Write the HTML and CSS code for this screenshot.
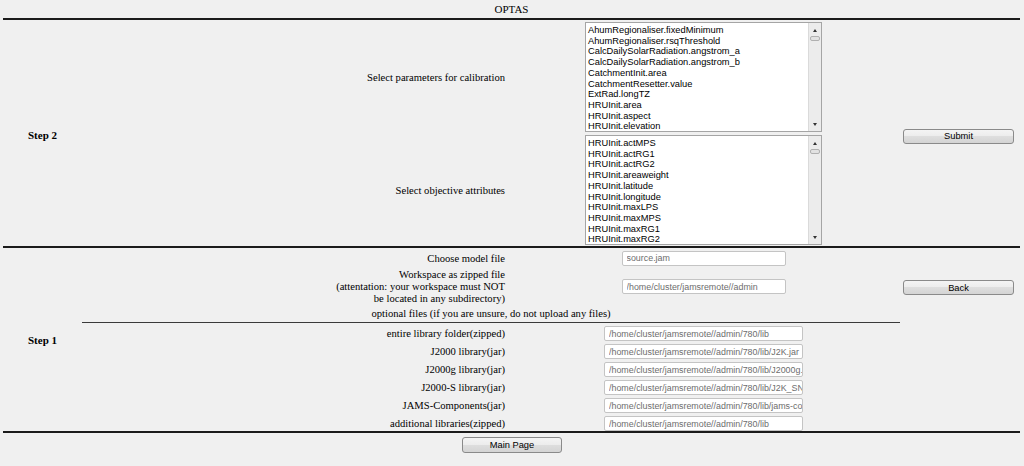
FILE: index.html
```html
<!DOCTYPE html>
<html>
<head>
<meta charset="utf-8">
<title>OPTAS</title>
<link rel="stylesheet" href="styles.css">
</head>
<body>
<div class="page">
  <div class="title">OPTAS</div>

  <section class="step step2">
    <div class="step-name s2name">Step 2</div>
    <div class="label r1">Select parameters for calibration</div>
    <div class="ctrl r1">
      <div class="listbox">
        <ul class="items">
          <li>AhumRegionaliser.fixedMinimum</li>
          <li>AhumRegionaliser.rsqThreshold</li>
          <li>CalcDailySolarRadiation.angstrom_a</li>
          <li>CalcDailySolarRadiation.angstrom_b</li>
          <li>CatchmentInit.area</li>
          <li>CatchmentResetter.value</li>
          <li>ExtRad.longTZ</li>
          <li>HRUInit.area</li>
          <li>HRUInit.aspect</li>
          <li>HRUInit.elevation</li>
        </ul>
        <div class="sbar"><span class="up"></span><span class="thumb"></span><span class="down"></span></div>
      </div>
    </div>
    <div class="label r2">Select objective attributes</div>
    <div class="ctrl r2">
      <div class="listbox">
        <ul class="items">
          <li>HRUInit.actMPS</li>
          <li>HRUInit.actRG1</li>
          <li>HRUInit.actRG2</li>
          <li>HRUInit.areaweight</li>
          <li>HRUInit.latitude</li>
          <li>HRUInit.longitude</li>
          <li>HRUInit.maxLPS</li>
          <li>HRUInit.maxMPS</li>
          <li>HRUInit.maxRG1</li>
          <li>HRUInit.maxRG2</li>
        </ul>
        <div class="sbar"><span class="up"></span><span class="thumb"></span><span class="down"></span></div>
      </div>
    </div>
    <div class="btn-cell s2btn"><button class="btn wide">Submit</button></div>
  </section>

  <section class="step step1">
    <div class="step-name s1name">Step 1</div>

    <div class="label rowa">Choose model file</div>
    <div class="ctrl rowa"><input class="field short" value="source.jam"></div>

    <div class="label rowb">Workspace as zipped file<br>(attentation: your workspace must NOT<br>be located in any subdirectory)</div>
    <div class="ctrl rowb"><input class="field short" value="/home/cluster/jamsremote//admin"></div>
    <div class="btn-cell rowb"><button class="btn wide">Back</button></div>

    <div class="optional">optional files (if you are unsure, do not upload any files)</div>

    <div class="label lib">entire library folder(zipped)</div>
    <div class="ctrl lib"><input class="field long" value="/home/cluster/jamsremote//admin/780/lib"></div>
    <div class="label lib">J2000 library(jar)</div>
    <div class="ctrl lib"><input class="field long" value="/home/cluster/jamsremote//admin/780/lib/J2K.jar"></div>
    <div class="label lib">J2000g library(jar)</div>
    <div class="ctrl lib"><input class="field long" value="/home/cluster/jamsremote//admin/780/lib/J2000g.jar"></div>
    <div class="label lib">J2000-S library(jar)</div>
    <div class="ctrl lib"><input class="field long" value="/home/cluster/jamsremote//admin/780/lib/J2K_SN.jar"></div>
    <div class="label lib">JAMS-Components(jar)</div>
    <div class="ctrl lib"><input class="field long" value="/home/cluster/jamsremote//admin/780/lib/jams-components.jar"></div>
    <div class="label lib">additional libraries(zipped)</div>
    <div class="ctrl lib"><input class="field long" value="/home/cluster/jamsremote//admin/780/lib"></div>
  </section>

  <div class="footer"><button class="btn main">Main Page</button></div>
</div>
</body>
</html>
```

FILE: styles.css
```css
html, body {
  margin: 0;
  padding: 0;
  background: #f0f0f0;
}
body {
  font-family: "Liberation Serif", "Times New Roman", serif;
  font-size: 10.6px;
  color: #000;
}
.page {
  margin: 0 3px;
  width: 1017px;
}
.title {
  height: 18px;
  line-height: 18px;
  text-align: center;
  font-size: 11px;
  border-bottom: 2px solid #1b1b1b;
}
.step {
  display: grid;
  grid-template-columns: 79px 425px 393px 117px;
  border-bottom: 2px solid #1b1b1b;
}
.step-name {
  font-weight: bold;
  font-size: 11px;
  align-self: center;
  justify-self: center;
  grid-column: 1;
}
.label {
  grid-column: 2;
  text-align: right;
  padding-right: 2px;
  align-self: center;
}
.ctrl {
  grid-column: 3;
  display: flex;
  justify-content: center;
  align-items: center;
}
.btn-cell {
  grid-column: 4;
  display: flex;
  justify-content: center;
  align-items: center;
}

/* step 2 */
.step2 {
  padding-top: 2px;
  grid-template-rows: 110px 114px;
}
.s2name { grid-row: 1 / 3; margin-top: 2px; }
.r1 { grid-row: 1; }
.r2 { grid-row: 2; }
.step2 .ctrl.r2 { align-items: flex-start; padding-top: 3px; }
.step2 .label.r2 { padding-top: 2px; }
.s2btn { grid-row: 1 / 3; padding-top: 4px; }

.listbox {
  width: 235px;
  height: 108px;
  border: 1px solid #a5a5a5;
  background: #fff;
  display: flex;
}
.items {
  list-style: none;
  margin: 0;
  padding: 2px 0 0 2px;
  flex: 1;
  font-family: "Liberation Sans", Arial, sans-serif;
  font-size: 9.3px;
  line-height: 10.7px;
  white-space: nowrap;
  overflow: hidden;
}
.sbar {
  width: 12px;
  border-left: 1px solid #dadada;
  background: #ececec;
  position: relative;
}
.up, .down {
  position: absolute;
  left: 4px;
  width: 0;
  height: 0;
  border-left: 2.5px solid transparent;
  border-right: 2.5px solid transparent;
}
.up { top: 6px; border-bottom: 3px solid #333; }
.down { bottom: 5px; border-top: 3px solid #333; }
.thumb {
  position: absolute;
  left: 1px;
  right: 1px;
  top: 13px;
  height: 3px;
  border: 1px solid #b0b0b0;
  border-radius: 2px;
  background: #e2e2e2;
}

/* step 1 */
.step1 {
  grid-template-rows: 20px 37px 18px repeat(6, 18px);
}
.s1name { grid-row: 1 / 10; }
.rowa { grid-row: 1; }
.rowb { grid-row: 2; line-height: 12px; }
.step1 .btn-cell.rowb { padding-top: 2px; }
.optional {
  grid-column: 2 / 4;
  grid-row: 3;
  text-align: center;
  line-height: 18px;
  border-bottom: 1px solid #3a3a3a;
  height: 17px;
}
.step1 .label.lib {
  align-self: start;
  padding-top: 3px;
  line-height: 15px;
}
.step1 .ctrl.lib { align-items: flex-start; padding-top: 3px; }

.field {
  box-sizing: border-box;
  height: 15px;
  margin: 0;
  padding: 0 0 0 4px;
  border: 1px solid #c4c4c4;
  border-radius: 2px;
  background: #fff;
  color: #6d6d6d;
  font-family: "Liberation Sans", Arial, sans-serif;
  font-size: 8.9px;
  outline: none;
}
.short { width: 164px; }
.long { width: 199px; }

.btn {
  box-sizing: border-box;
  margin: 0;
  padding: 0;
  border: 1px solid #8a8a8a;
  border-radius: 3px;
  background: linear-gradient(#f4f4f4, #ececec 50%, #dedede 50%, #d4d4d4);
  font-family: "Liberation Sans", Arial, sans-serif;
  font-size: 9.3px;
  color: #000;
}
.wide { width: 111px; height: 15px; }
.main { width: 100px; height: 16px; }
.footer {
  display: flex;
  justify-content: center;
  padding-top: 4px;
  margin-left: -3px;
  width: 1024px;
}
```
